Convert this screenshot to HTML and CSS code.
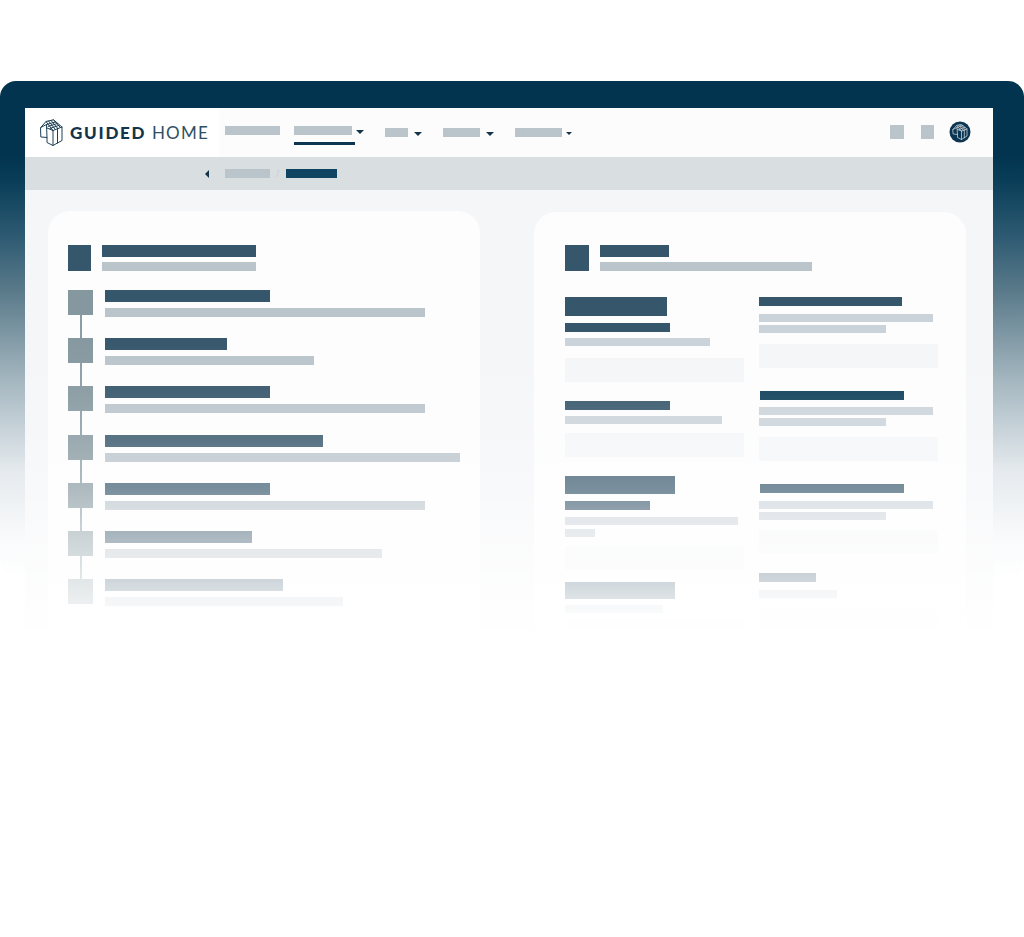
FILE: index.html
```html
<!DOCTYPE html>
<html lang="en">
<head>
<meta charset="utf-8">
<title>Guided Home</title>
<link rel="stylesheet" href="styles.css">
</head>
<body>
<div class="frame">
  <div class="screen">
    <header class="nav">
      <div class="brand">
        <svg class="logo" viewBox="0 0 23 27" aria-hidden="true">
          <g fill="none" stroke="#1f4056" stroke-width="1" stroke-linejoin="round" stroke-linecap="round">
            <path d="M.8 8.5 L6 2.5 L13.5 .8 L22 8 L22 21.5 L13 26.5 L7 23.5 L7 18.5 L1.2 18 Z"/>
            <path d="M.8 8.5 L6.5 5.5 L7 18.5 M7 9 L13 11.5 L13 26.5 M13 11.5 L22 8 M17.5 9.6 L17.5 24"/>
            <path d="M6 2.5 L13 11.5 M8.5 2 L15.5 10.6 M11 1.4 L18 9.7 M13.5 .8 L20.5 8.6"/>
            <path d="M6.5 5.5 L15.5 3 M8.2 7.4 L17.2 4.6 M10 9.4 L19 6.4"/>
          </g>
        </svg>
        <span class="wordmark"><b>GUIDED</b> <span class="light">HOME</span></span>
      </div>
      <nav class="menu">
        <span class="item"><i class="bar sub tall" style="width:55px"></i></span>
        <span class="item active"><i class="bar sub tall" style="width:58px"></i><i class="caret"></i></span>
        <span class="item low"><i class="bar sub" style="width:23px"></i><i class="caret"></i></span>
        <span class="item low"><i class="bar sub" style="width:37px"></i><i class="caret"></i></span>
        <span class="item low last"><i class="bar sub" style="width:47px"></i><i class="caret small"></i></span>
      </nav>
      <div class="tools">
        <i class="tool"></i>
        <i class="tool"></i>
        <svg class="avatar" viewBox="0 0 22 22" aria-hidden="true">
          <circle cx="11" cy="11" r="10.5" fill="#0b3550"/>
          <g fill="none" stroke="#c4d0d8" stroke-width=".8" stroke-linejoin="round" stroke-linecap="round">
            <path d="M4 8.5 L7.5 4.5 L12.5 3.5 L18 8 L18 15 L12.5 18.5 L8.5 16.5 L8.5 13.5 L4.5 13 Z"/>
            <path d="M4 8.5 L8 6.5 L8.5 13.5 M8.5 8.5 L12.5 10 L12.5 18.5 M12.5 10 L18 8 M15.3 9 L15.3 16.8"/>
            <path d="M7.5 4.5 L12.5 10 M9.5 4 L14.5 9.4 M11 3.8 L16.2 8.6 M8 6.5 L14 4.6 M10 8.4 L16 6.4"/>
          </g>
        </svg>
      </div>
    </header>
    <div class="crumbs">
      <i class="back"></i>
      <i class="bar sub crumb" style="width:45px"></i>
      <span class="slash">/</span>
      <i class="bar current" style="width:51px"></i>
    </div>
    <main class="board">
      <section class="card timeline">
        <div class="head">
          <i class="head-icon"></i>
          <div class="head-text">
            <i class="bar title" style="width:154px"></i>
            <i class="bar sub" style="width:154px"></i>
          </div>
        </div>
        <ol class="steps">
          <li class="step"><i class="node"></i><div class="step-text"><i class="bar title" style="width:165px"></i><i class="bar sub" style="width:320px"></i></div></li>
          <li class="step"><i class="node"></i><div class="step-text"><i class="bar title" style="width:122px"></i><i class="bar sub" style="width:209px"></i></div></li>
          <li class="step"><i class="node"></i><div class="step-text"><i class="bar title" style="width:165px"></i><i class="bar sub" style="width:320px"></i></div></li>
          <li class="step"><i class="node"></i><div class="step-text"><i class="bar title" style="width:218px"></i><i class="bar sub" style="width:355px"></i></div></li>
          <li class="step"><i class="node"></i><div class="step-text"><i class="bar title" style="width:165px"></i><i class="bar sub" style="width:320px"></i></div></li>
          <li class="step"><i class="node"></i><div class="step-text"><i class="bar title" style="width:147px"></i><i class="bar sub" style="width:277px"></i></div></li>
          <li class="step"><i class="node"></i><div class="step-text"><i class="bar title" style="width:178px"></i><i class="bar sub" style="width:238px"></i></div></li>
        </ol>
      </section>
      <section class="card details">
        <div class="head">
          <i class="head-icon"></i>
          <div class="head-text">
            <i class="bar title" style="width:69px"></i>
            <i class="bar sub" style="width:212px"></i>
          </div>
        </div>
        <div class="columns">
          <div class="column left">
            <div class="block b1">
              <i class="bar title big" style="width:102px"></i>
              <i class="bar title slim" style="width:105px"></i>
              <i class="bar line" style="width:145px"></i>
              <i class="field"></i>
            </div>
            <div class="block b2">
              <i class="bar title slim" style="width:105px"></i>
              <i class="bar line" style="width:157px"></i>
              <i class="field"></i>
            </div>
            <div class="block b3">
              <i class="bar title big" style="width:110px"></i>
              <i class="bar title slim" style="width:85px"></i>
              <i class="bar line" style="width:173px"></i>
              <i class="bar line tight" style="width:30px"></i>
              <i class="field"></i>
            </div>
            <div class="block b4">
              <i class="bar title big" style="width:110px"></i>
              <i class="bar line" style="width:98px"></i>
              <i class="field"></i>
            </div>
          </div>
          <div class="column right">
            <div class="block r1">
              <i class="bar title slim" style="width:143px"></i>
              <i class="bar line" style="width:174px"></i>
              <i class="bar line tight" style="width:127px"></i>
              <i class="field"></i>
            </div>
            <div class="block r2">
              <i class="bar title slim strong" style="width:144px"></i>
              <i class="bar line" style="width:174px"></i>
              <i class="bar line tight" style="width:127px"></i>
              <i class="field"></i>
            </div>
            <div class="block r3">
              <i class="bar title slim" style="width:144px"></i>
              <i class="bar line" style="width:174px"></i>
              <i class="bar line tight" style="width:127px"></i>
              <i class="field"></i>
            </div>
            <div class="block r4">
              <i class="bar title slim" style="width:57px"></i>
              <i class="bar line" style="width:78px"></i>
              <i class="field"></i>
            </div>
          </div>
        </div>
      </section>
    </main>
    <div class="fade"></div>
  </div>
</div>
</body>
</html>
```
FILE: styles.css
```css
* { box-sizing: border-box; }
html, body { margin: 0; height: 937px; background: #fff; overflow: hidden; }
i { display: block; font-style: normal; }

.frame {
  margin-top: 81px;
  height: 500px;
  padding: 27px 31px 0 25px;
  border-radius: 16px 16px 22px 22px;
  background: linear-gradient(180deg, #02344f 0, #02344f 75px, #0a3e58 100px, #2d5a72 155px, #5a7a8a 210px, #a5b7c0 300px, #e5eaee 390px, #fafbfc 460px, #fff 500px);
}
.screen { position: relative; height: 562px; background: #f5f6f8; }
.fade {
  position: absolute;
  inset: 0;
  background: linear-gradient(180deg,
    rgba(255,255,255,0) 0,
    rgba(255,255,255,0) 220px,
    rgba(255,255,255,.07) 282px,
    rgba(255,255,255,.18) 332px,
    rgba(255,255,255,.34) 382px,
    rgba(255,255,255,.58) 429px,
    rgba(255,255,255,.78) 477px,
    rgba(255,255,255,.97) 525px,
    rgba(255,255,255,.985) 562px);
}

.nav { display: flex; align-items: stretch; height: 49px; background: #fcfcfd; }
.brand { display: flex; align-items: center; gap: 7px; width: 194px; padding: 0 0 1px 15px; background: #fff; }
.logo { width: 23px; height: 27px; flex: none; }
.wordmark { font: 400 17px/1 Lato, "Open Sans", sans-serif; letter-spacing: 1.25px; color: #1f4056; white-space: nowrap; }
.wordmark b { font-weight: 900; letter-spacing: 1.75px; color: #14344a; }
.wordmark .light { color: #2f4f65; }

.menu { display: flex; align-items: flex-start; flex: 1; padding: 18px 0 0 6px; }
.item { display: flex; align-items: center; gap: 4px; margin-right: 14px; position: relative; }
.item.low { margin-top: 2px; gap: 6px; margin-right: 21px; }
.item.low.last { gap: 4px; }
.item.active { margin-right: 21px; }
.item.active::after { content: ""; position: absolute; left: 0; top: 16px; width: 61px; height: 3px; background: #0b3550; }
.caret { width: 0; height: 0; margin-top: 2px; border: 4px solid transparent; border-top-color: #14344a; border-bottom: 0; }
.caret.small { border-width: 3px; border-bottom: 0; border-top-color: #14344a; }

.tools { display: flex; align-items: center; gap: 17px; padding: 0 22px 1px 0; }
.tool { width: 14px; height: 14px; background: #b9c4cb; }
.tool + .tool { width: 13px; }
.avatar { width: 22px; height: 22px; margin-left: -2px; }

.crumbs { display: flex; align-items: center; height: 33px; padding-left: 180px; background: #d9dee1; }
.back { width: 0; height: 0; border: 4px solid transparent; border-right-color: #14344a; border-left: 0; margin-right: 16px; }
.crumb { height: 9px; margin: 0; }
.slash { width: 16px; text-align: center; font: 400 10px/1 "Liberation Sans", sans-serif; color: #c9d0d5; }

.board { display: flex; gap: 54px; padding: 21px 0 0 23px; }
.card { width: 432px; height: 440px; border-radius: 22px; background: #fdfdfe; }
.timeline { padding: 34px 0 0 20px; }
.details { margin-top: 1px; padding: 33px 0 0 31px; }

.bar { height: 9px; background: #b9c4cb; }
.bar.current { height: 9px; background: #0f4562; }
.bar.title { height: 12px; background: #36566b; }
.bar.slim { height: 9px; }
.bar.big { height: 19px; }
.bar.strong { background: #0f3f5a; }
.bar.line { height: 8px; background: #cbd3da; margin-top: 8px; }
.bar.line.tight { margin-top: 3px; }

.head { display: flex; gap: 11px; }
.head-icon { width: 23px; height: 26px; background: #36566b; }
.head-text { display: flex; flex-direction: column; gap: 5px; }
.details .head-icon { width: 24px; }

.steps { list-style: none; margin: 19px 0 0; padding: 0; }
.step { display: flex; gap: 12px; height: 48.2px; position: relative; }
.step::after { content: ""; position: absolute; left: 11.5px; top: 25px; width: 2px; height: 24px; background: #8a9ca6; }
.step:last-child::after { display: none; }
.node { width: 25px; height: 25px; background: #85989f; }
.step-text { display: flex; flex-direction: column; gap: 6px; }

.columns { display: flex; gap: 15px; margin-top: 26px; }
.column { width: 179px; }
.field { width: 179px; height: 24px; margin-top: 12px; background: #f5f6f8; }

.bar.big + .bar.slim { margin-top: 7px; }
.left .bar.line { margin-top: 6px; }
.left .b3 .bar.line { margin-top: 7px; }
.left .b3 .bar.line.tight { margin-top: 4px; }
.b2 .field, .b3 .field { margin-top: 9px; }
.b4 .field { margin-top: 6px; }
.b2, .b3 { margin-top: 19px; }
.b4 { margin-top: 12px; }
.b3 .bar.big { height: 18px; }
.b4 .bar.big { height: 17px; }

.r2, .r3 { margin-top: 23px; }
.r4 { margin-top: 19px; }
.r2 .bar.slim, .r3 .bar.slim { margin-left: 1px; }
.r2 .bar.line:not(.tight) { margin-top: 7px; }
.r1 .field, .r2 .field { margin-top: 11px; }
.r3 .field { margin-top: 10px; }
```
